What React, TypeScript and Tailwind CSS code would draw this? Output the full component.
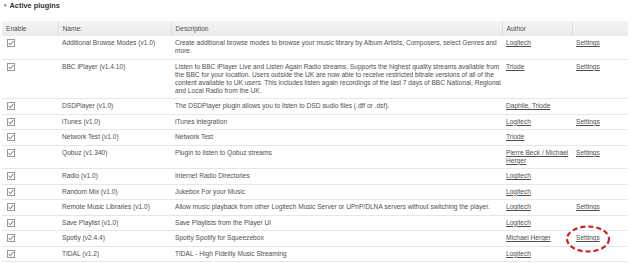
import React from "react";

type Plugin = {
  name: string;
  desc: string[];
  author: string[];
  settings?: boolean;
  circled?: boolean;
};

const plugins: Plugin[] = [
  {
    name: "Additional Browse Modes (v1.0)",
    desc: [
      "Create additional browse modes to browse your music library by Album Artists, Composers, select Genres and",
      "more.",
    ],
    author: ["Logitech"],
    settings: true,
  },
  {
    name: "BBC iPlayer (v1.4.10)",
    desc: [
      "Listen to BBC iPlayer Live and Listen Again Radio streams. Supports the highest quality streams available from",
      "the BBC for your location. Users outside the UK are now able to receive restricted bitrate versions of all of the",
      "content available to UK users. This includes listen again recordings of the last 7 days of BBC National, Regional",
      "and Local Radio from the UK.",
    ],
    author: ["Triode"],
    settings: true,
  },
  {
    name: "DSDPlayer (v1.0)",
    desc: ["The DSDPlayer plugin allows you to listen to DSD audio files (.dff or .dsf)."],
    author: ["Daphile, Triode"],
  },
  { name: "iTunes (v1.0)", desc: ["iTunes integration"], author: ["Logitech"], settings: true },
  { name: "Network Test (v1.0)", desc: ["Network Test"], author: ["Triode"] },
  {
    name: "Qobuz (v1.340)",
    desc: ["Plugin to listen to Qobuz streams"],
    author: ["Pierre Beck / Michael", "Herger"],
    settings: true,
  },
  { name: "Radio (v1.0)", desc: ["Internet Radio Directories"], author: ["Logitech"] },
  { name: "Random Mix (v1.0)", desc: ["Jukebox For your Music"], author: ["Logitech"] },
  {
    name: "Remote Music Libraries (v1.0)",
    desc: [
      "Allow music playback from other Logitech Music Server or UPnP/DLNA servers without switching the player.",
    ],
    author: ["Logitech"],
    settings: true,
  },
  { name: "Save Playlist (v1.0)", desc: ["Save Playlists from the Player UI"], author: ["Logitech"] },
  {
    name: "Spotty (v2.4.4)",
    desc: ["Spotty Spotify for Squeezebox"],
    author: ["Michael Herger"],
    settings: true,
    circled: true,
  },
  { name: "TIDAL (v1.2)", desc: ["TIDAL - High Fidelity Music Streaming"], author: ["Logitech"] },
];

function Checkbox() {
  return (
    <span className="inline-block w-[8px] h-[8px] border border-[#999] bg-white relative align-top">
      <svg viewBox="0 0 8 8" className="absolute w-[8px] h-[8px] -left-px -top-px">
        <path d="M1.6 4.1 L3.3 5.7 L6.4 2" fill="none" stroke="#555" strokeWidth="0.9" />
      </svg>
    </span>
  );
}

export default function App() {
  const cell = "px-[4px] py-[3.25px] align-top text-left font-normal";
  const head = "px-[4px] py-[3.5px] text-left font-normal border-r border-[#dedede] last:border-r-0";
  return (
    <div
      className="w-[631px] h-[263px] overflow-hidden bg-white text-[#505050] text-[6.6px] leading-[8px]"
      style={{ fontFamily: '"Liberation Sans", Arial, sans-serif' }}
    >
      <div className="h-[21px] flex items-start pt-[2px] pl-[3px] gap-[2px] font-bold text-[7.4px] text-[#333]">
        <span className="text-[4.5px] leading-[8px] text-[#666]">▼</span>
        <span className="leading-[8px]">Active plugins</span>
      </div>
      <table className="table-fixed border-collapse ml-[2px] w-[626px]">
        <colgroup>
          <col className="w-[56px]" />
          <col className="w-[113px]" />
          <col className="w-[331px]" />
          <col className="w-[70px]" />
          <col className="w-[56px]" />
        </colgroup>
        <thead>
          <tr className="bg-gradient-to-b from-[#f4f4f4] to-[#ebebeb] h-[15px]">
            <th className={head}>Enable</th>
            <th className={head}>Name:</th>
            <th className={head}>Description</th>
            <th className={head}>Author</th>
            <th className={head}></th>
          </tr>
        </thead>
        <tbody>
          {plugins.map((p) => (
            <tr key={p.name} className="border-b border-[#e6e6e6]">
              <td className={cell + " pl-[5px]"}>
                <Checkbox />
              </td>
              <td className={cell}>
                <div className="whitespace-nowrap">{p.name}</div>
              </td>
              <td className={cell + " pr-0"}>
                {p.desc.map((l, i) => (
                  <div key={i} className="whitespace-nowrap">
                    {l}
                  </div>
                ))}
              </td>
              <td className={cell}>
                {p.author.map((a, i) => (
                  <div key={i} className="whitespace-nowrap underline">
                    {a}
                  </div>
                ))}
              </td>
              <td className={cell}>
                {p.settings && (
                  <span className="relative inline-block underline">
                    Settings
                    {p.circled && (
                      <svg
                        viewBox="0 0 46 30"
                        className="absolute -left-[11px] -top-[10px] w-[46px] h-[30px] overflow-visible"
                      >
                        <ellipse
                          cx="23"
                          cy="15"
                          rx="21"
                          ry="12.5"
                          fill="none"
                          stroke="#d21f1f"
                          strokeWidth="2.2"
                          strokeDasharray="5 3"
                        />
                      </svg>
                    )}
                  </span>
                )}
              </td>
            </tr>
          ))}
        </tbody>
      </table>
    </div>
  );
}
